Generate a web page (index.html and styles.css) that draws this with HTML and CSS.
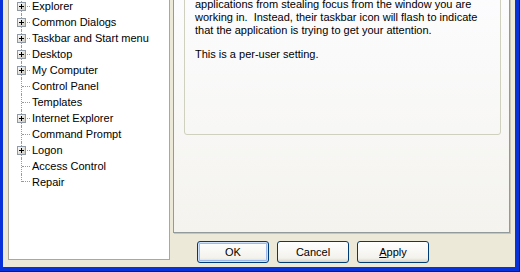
FILE: index.html
```html
<!DOCTYPE html>
<html lang="en">
<head>
    <meta charset="UTF-8">
    <meta name="viewport" content="width=device-width, initial-scale=1.0">
    <title>Tweak settings</title>
    <link rel="stylesheet" href="styles.css">
</head>
<body>
<div class="window">
    <div class="client">
        <div class="tree">
            <ul class="tree-list">
                <li class="node"><span class="twig"><svg class="expander" width="9" height="9" viewBox="0 0 9 9"><rect x="0.5" y="0.5" width="8" height="8" fill="url(#box)" stroke="#8f9aa6"/><path d="M2 4.5h5M4.5 2v5" stroke="#000"/></svg></span><span class="label">Explorer</span></li>
                <li class="node"><span class="twig"><svg class="expander" width="9" height="9" viewBox="0 0 9 9"><rect x="0.5" y="0.5" width="8" height="8" fill="url(#box)" stroke="#8f9aa6"/><path d="M2 4.5h5M4.5 2v5" stroke="#000"/></svg></span><span class="label">Common Dialogs</span></li>
                <li class="node"><span class="twig"><svg class="expander" width="9" height="9" viewBox="0 0 9 9"><rect x="0.5" y="0.5" width="8" height="8" fill="url(#box)" stroke="#8f9aa6"/><path d="M2 4.5h5M4.5 2v5" stroke="#000"/></svg></span><span class="label">Taskbar and Start menu</span></li>
                <li class="node"><span class="twig"><svg class="expander" width="9" height="9" viewBox="0 0 9 9"><rect x="0.5" y="0.5" width="8" height="8" fill="url(#box)" stroke="#8f9aa6"/><path d="M2 4.5h5M4.5 2v5" stroke="#000"/></svg></span><span class="label">Desktop</span></li>
                <li class="node"><span class="twig"><svg class="expander" width="9" height="9" viewBox="0 0 9 9"><rect x="0.5" y="0.5" width="8" height="8" fill="url(#box)" stroke="#8f9aa6"/><path d="M2 4.5h5M4.5 2v5" stroke="#000"/></svg></span><span class="label">My Computer</span></li>
                <li class="node"><span class="twig"></span><span class="label">Control Panel</span></li>
                <li class="node"><span class="twig"></span><span class="label">Templates</span></li>
                <li class="node"><span class="twig"><svg class="expander" width="9" height="9" viewBox="0 0 9 9"><rect x="0.5" y="0.5" width="8" height="8" fill="url(#box)" stroke="#8f9aa6"/><path d="M2 4.5h5M4.5 2v5" stroke="#000"/></svg></span><span class="label">Internet Explorer</span></li>
                <li class="node"><span class="twig"></span><span class="label">Command Prompt</span></li>
                <li class="node"><span class="twig"><svg class="expander" width="9" height="9" viewBox="0 0 9 9"><rect x="0.5" y="0.5" width="8" height="8" fill="url(#box)" stroke="#8f9aa6"/><path d="M2 4.5h5M4.5 2v5" stroke="#000"/></svg></span><span class="label">Logon</span></li>
                <li class="node"><span class="twig"></span><span class="label">Access Control</span></li>
                <li class="node"><span class="twig last"></span><span class="label">Repair</span></li>
            </ul>
            <svg class="defs" width="0" height="0">
                <defs>
                    <linearGradient id="box" x1="0" y1="0" x2="1" y2="1">
                        <stop offset="0" stop-color="#ffffff"/>
                        <stop offset="1" stop-color="#c9c6b8"/>
                    </linearGradient>
                </defs>
            </svg>
        </div>

        <div class="pane">
            <div class="tab-body">
                <div class="group">
                    <p>applications from stealing focus from the window you are<br>working in.&nbsp; Instead, their taskbar icon will flash to indicate<br>that the application is trying to get your attention.</p>
                    <p>This is a per-user setting.</p>
                </div>
            </div>
            <div class="buttons">
                <button class="btn default">OK</button>
                <button class="btn">Cancel</button>
                <button class="btn"><u>A</u>pply</button>
            </div>
        </div>
    </div>
</div>
</body>
</html>
```

FILE: styles.css
```css
body {
    margin: 0;
    width: 520px;
    height: 272px;
    overflow: hidden;
    font-family: "Liberation Sans", Arial, sans-serif;
    font-size: 11px;
    color: #000;
}

.window {
    box-sizing: border-box;
    width: 520px;
    height: 272px;
    padding: 0 4px 4px 3px;
    background: #0831d9;
    border-right: 1px solid #001a9c;
    border-bottom: 1px solid #001a9c;
}

.client {
    display: flex;
    gap: 3px;
    height: 267px;
    padding-left: 5px;
    background: #ece9d8;
    overflow: hidden;
}

/* tree view */
.tree {
    box-sizing: border-box;
    width: 162px;
    height: 261px;
    margin-top: -1px;
    background: #fff;
    border: 1px solid #aca899;
}

.tree-list {
    list-style: none;
    margin: -2px 0 0;
    padding: 0;
}

.node {
    display: flex;
    align-items: center;
    height: 16px;
}

.twig {
    display: flex;
    align-items: center;
    align-self: stretch;
    width: 8px;
    margin-left: 12px;
    border-left: 1px dotted #9a9a9a;
}

.twig::after {
    content: "";
    flex: 1;
    border-top: 1px dotted #9a9a9a;
}

.twig.last {
    align-self: flex-start;
    align-items: flex-end;
    height: 8px;
}

.expander {
    display: block;
    flex: none;
    margin-left: -5px;
    margin-right: 1px;
}

.label {
    padding: 0 2px;
    white-space: nowrap;
}

.defs {
    position: absolute;
}

/* property page */
.pane {
    display: flex;
    flex-direction: column;
    width: 337px;
}

.tab-body {
    box-sizing: border-box;
    height: 234px;
    margin-top: -1px;
    padding: 0 8px 0 10px;
    border: 1px solid #919b9c;
    background: linear-gradient(#fcfcfe, #f4f3ee);
    box-shadow: 1px 1px 0 #c9c6b8;
}

.group {
    box-sizing: border-box;
    height: 155px;
    margin-top: -20px;
    padding: 17px 10px 0 10px;
    border: 1px solid #d0d0bf;
    border-radius: 3px;
}

.group p {
    margin: 0 0 11px;
    line-height: 13px;
    white-space: nowrap;
}

.buttons {
    display: flex;
    gap: 8px;
    margin-top: 8px;
    padding-left: 24px;
}

.btn {
    width: 72px;
    height: 22px;
    padding: 0;
    font-family: inherit;
    font-size: 11px;
    color: #000;
    border: 1px solid #003c74;
    border-radius: 3px;
    background: linear-gradient(#ffffff, #f3f2ec 80%, #d8d3c6);
}

.btn.default {
    box-shadow: inset 0 0 0 1px #cfe2fd, inset 0 0 0 2px #9cb8ef;
}
```
